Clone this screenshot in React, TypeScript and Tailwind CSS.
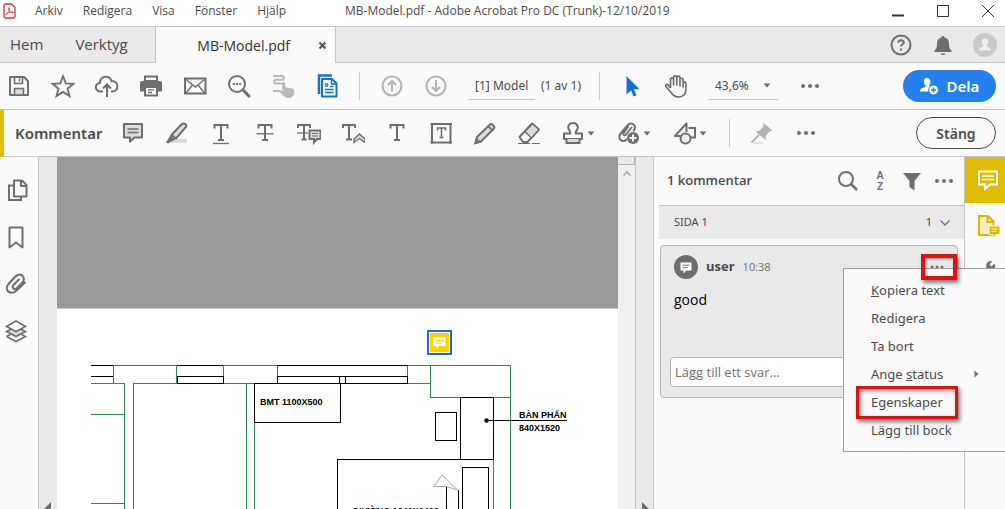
import type { ReactNode } from 'react'

const MENUS = ['Arkiv', 'Redigera', 'Visa', 'Fönster', 'Hjälp']

function Icon({ children, size = 24 }: { children: ReactNode; size?: number }) {
  return (
    <svg width={size} height={size} viewBox="0 0 24 24" fill="none" stroke="#6e6e6e" strokeWidth="2" className="shrink-0" aria-hidden="true">
      {children}
    </svg>
  )
}

function Tool({ label, children }: { label: string; children: ReactNode }) {
  return (
    <button aria-label={label} className="flex h-6 w-6 shrink-0 items-center justify-center">
      <Icon>{children}</Icon>
    </button>
  )
}

function MenuTool({ label, children }: { label: string; children: ReactNode }) {
  return (
    <button aria-label={label} className="flex h-6 w-9 shrink-0 items-center gap-0.5">
      <Icon>{children}</Icon>
      <Caret />
    </button>
  )
}

function Caret() {
  return (
    <svg width="8" height="5" viewBox="0 0 8 5" className="shrink-0" aria-hidden="true">
      <path d="M0.5 0.5h7L4 4.5z" fill="#6e6e6e" />
    </svg>
  )
}

function Dots() {
  return (
    <g fill="#6e6e6e" stroke="none">
      <circle cx="5" cy="12" r="2" />
      <circle cx="12" cy="12" r="2" />
      <circle cx="19" cy="12" r="2" />
    </g>
  )
}

function Divider() {
  return <div className="h-7 w-px shrink-0 bg-[#c8c8c8]" />
}

// serif T shared by the text markup tools
const T_PATH = 'M5.5 7.5V4h13v3.5M12 4v15M9 19h6'

function TitleBar() {
  return (
    <header className="relative flex h-[27px] shrink-0 items-center border-b border-[#c4c4c4] bg-white pb-1 pl-[3px] font-['Open_Sans',sans-serif] text-[12px]">
      <svg width="13" height="16" viewBox="0 0 13 16" fill="none" stroke="#d7373f" aria-hidden="true">
        <path d="M2.5 1h6L12 4.5v9a1.5 1.5 0 0 1-1.5 1.5h-8A1.5 1.5 0 0 1 1 13.5v-11A1.5 1.5 0 0 1 2.5 1z" strokeWidth="1.3" />
        <path d="M3 11.5c2-1 3.7-4 3.3-6.3 0-.8-.9-.7-.8.1.3 2 2.5 4.5 4.5 4.600.9 0 .8-1-.2-1-2 0-4.800.7-6.500 1.800-.7.500-.9.900-.3.800z" strokeWidth="0.9" />
      </svg>
      <nav className="ml-[19px] flex gap-5">
        {MENUS.map(m => <button key={m}>{m}</button>)}
      </nav>
      <h1 className="absolute left-[345px] whitespace-nowrap">MB-Model.pdf - Adobe Acrobat Pro DC (Trunk)-12/10/2019</h1>
      <div className="ml-auto flex gap-[33px] pr-[11px]">
        <button aria-label="Minimera">
          <svg width="12" height="12" viewBox="0 0 12 12"><path d="M0 10.5h12" stroke="#333" strokeWidth="2" /></svg>
        </button>
        <button aria-label="Maximera">
          <svg width="12" height="12" viewBox="0 0 12 12"><path d="M.5.5h11v11H.5z" fill="none" stroke="#333" /></svg>
        </button>
        <button aria-label="Stäng fönster">
          <svg width="12" height="12" viewBox="0 0 12 12"><path d="M0 0l12 12M12 0L0 12" stroke="#333" /></svg>
        </button>
      </div>
    </header>
  )
}

function TabBar() {
  return (
    <div className="flex h-9 shrink-0 bg-[#e9e9e9] font-['Open_Sans',sans-serif]">
      <div className="flex w-[156px] items-center gap-8 border-r border-b border-[#c4c4c4] pl-[10px] text-[15px]">
        <button>Hem</button>
        <button>Verktyg</button>
      </div>
      <div className="flex w-[180px] items-center justify-end gap-7 border-r border-[#c4c4c4] bg-[#fafafa] pr-2 text-[14px] text-[#323232]">
        <span>MB-Model.pdf</span>
        <button aria-label="Stäng flik">
          <svg width="9" height="9" viewBox="0 0 9 9"><path d="M1.5 1.5l6 6M7.5 1.5l-6 6" stroke="#555" strokeWidth="2" /></svg>
        </button>
      </div>
      <div className="flex flex-1 items-center justify-end gap-[18px] border-b border-[#c4c4c4] pr-2">
        <Tool label="Hjälp">
          <circle cx="12" cy="12" r="9.5" />
          <path d="M9.300 9.800c0-3.600 5.400-3.400 5.400-.3 0 2-2.700 2-2.700 4" />
          <path d="M12 15.500v2.200" />
        </Tool>
        <Tool label="Meddelanden">
          <path d="M12 3c-1 0-1.500.6-1.500 1.500C7.500 5 6 7.500 6 10.500c0 4.500-.8 5.500-2.500 7v1.500h17v-1.500c-1.700-1.500-2.500-2.500-2.500-7 0-3-1.500-5.500-4.500-6C13.500 3.600 13 3 12 3zM9.500 20.500h5c-.5 2-4.500 2-5 0z" fill="#6e6e6e" stroke="none" />
        </Tool>
        <Tool label="Konto">
          <circle cx="12" cy="12" r="12" fill="#cacaca" stroke="none" />
          <path d="M12 5.500c-2.200 0-3.200 1.600-3.200 3.600 0 1.300.6 2.500 1.500 3.200v1.200c-2 .6-4.300 1.200-4.300 4h12c0-2.800-2.300-3.400-4.300-4v-1.200c.9-.7 1.500-1.900 1.500-3.200 0-2-1-3.600-3.200-3.600z" fill="#f0f0f0" stroke="none" />
        </Tool>
      </div>
    </div>
  )
}

function MainToolbar() {
  return (
    <div className="flex h-[47px] shrink-0 items-center gap-5 border-b border-[#c4c4c4] bg-[#fafafa] pl-[7px] pr-[9px] text-[12px]">
      <Tool label="Spara">
        <path d="M3 3h14l4 4v14H3z" strokeLinejoin="round" />
        <path d="M7.500 3v6.500h8V3M12.500 4.500v3" strokeWidth="1.600" />
        <path d="M7.500 21v-6.500h9V21z" fill="#dcdcdc" strokeWidth="1.600" />
      </Tool>
      <Tool label="Stjärnmärk">
        <path d="M12 2.200l2.800 7.200 7.700.4-6 4.900 2 7.400-6.500-4.200-6.500 4.200 2-7.400-6-4.900 7.700-.4z" strokeWidth="1.800" />
      </Tool>
      <Tool label="Ladda upp">
        <path d="M8 17.500H5.500a4.300 4.300 0 0 1-.6-8.600C5 1.500 15 .5 16.500 7c7.500-.3 8 10.500.5 10.500h-1" />
        <path d="M12 23V11M8 14.500l4-4 4 4" />
      </Tool>
      <Tool label="Skriv ut">
        <path d="M6 7V2.500h12V7z" />
        <path d="M1 9a2 2 0 0 1 2-2h18a2 2 0 0 1 2 2v8.500h-4V14H5v3.500H1z" fill="#6e6e6e" stroke="none" />
        <path d="M6 13h12v8.500H6z" fill="#fafafa" />
        <path d="M9 15.800h6M9 18.500h4" strokeWidth="1.300" />
      </Tool>
      <Tool label="E-post">
        <path d="M2 4.500h20.500v15H2z" />
        <path d="M3 5.500l9.300 7.500 9.200-7.500M3 19l6.500-8M21.500 19L15 11" strokeWidth="1.400" />
      </Tool>
      <Tool label="Sök">
        <circle cx="10" cy="10" r="8" />
        <path d="M16 16l7 7" strokeWidth="3" />
        <path d="M5.800 10h2M9 10h2M12.200 10h2" />
      </Tool>
      <Tool label="Pekrullning">
        <path d="M2 2h9a1.800 1.800 0 0 1 0 3.800H5a1.800 1.800 0 0 0 0 3.700h6a1.800 1.800 0 0 1 0 3.700M2 17h7" stroke="#b9b9b9" />
        <path d="M11.500 9.500c0-2 2.800-2 2.800 0v3.700l6 1c2 .5 3 1.600 3 3.500 0 4-2.500 6.300-6 6.300-3 0-5.500-2.300-8.800-6.200-1-1.400.6-2.400 3-.8z" fill="#b9b9b9" stroke="none" />
      </Tool>
      <Tool label="Sidor">
        <g stroke="#1473c8">
          <path d="M4 20V1.500h13" strokeWidth="2.500" />
          <path d="M7 5h10l4.500 4.500v13H7z" fill="#fafafa" strokeLinejoin="round" />
          <path d="M16.500 5.500v4.500h4.500" strokeWidth="1.300" />
          <path d="M10 18.500h8.500M10 15.500h8.500M15 12.500h3.500" strokeWidth="1.300" />
          <circle cx="11.500" cy="11" r="1.300" strokeWidth="1.200" />
        </g>
      </Tool>
      <Divider />
      <Tool label="Föregående sida">
        <g stroke="#b4b4b4"><circle cx="12" cy="12" r="9.500" /><path d="M12 17.500V7.500M8 11l4-4 4 4" /></g>
      </Tool>
      <Tool label="Nästa sida">
        <g stroke="#b4b4b4"><circle cx="12" cy="12" r="9.500" /><path d="M12 6v10.500M8 13l4 4 4-4" /></g>
      </Tool>
      <div className="flex shrink-0 items-center gap-1.5">
        <input aria-label="Sida" defaultValue="[1] Model" className="h-7 w-[67px] border-b border-[#c8c8c8] pl-[7px] outline-none" />
        <span className="w-[38px] whitespace-nowrap">(1 av 1)</span>
      </div>
      <Divider />
      <Tool label="Markera">
        <path d="M6.500 2v18.500l4.500-4 2.500 6 3-1.300-2.700-6h5.700z" fill="#1473c8" stroke="none" />
      </Tool>
      <Tool label="Handverktyg">
        <path d="M6.500 14V5.500a1.500 1.500 0 0 1 3.100 0V11V3.500a1.500 1.500 0 0 1 3.200 0V11V3.800a1.500 1.500 0 0 1 3.200 0V12V5.800a1.500 1.500 0 0 1 3.100 0V13V9.500a1.400 1.400 0 0 1 2.900 0V15c0 5-3 8-7.500 8-4.200 0-6-2-7.800-5L1.800 12.500c-.7-2.200 1.300-2.600 2.500-1.300L6.500 14" strokeWidth="1.700" strokeLinejoin="round" />
      </Tool>
      <button className="flex h-7 w-[70px] shrink-0 items-center justify-between border-b border-[#c8c8c8] px-[7px]">43,6% <Caret /></button>
      <Tool label="Fler verktyg"><Dots /></Tool>
      <button className="ml-auto flex h-8 w-[93px] shrink-0 items-center justify-center gap-2 rounded-full bg-[#2680eb] text-[15px] font-semibold text-white">
        <svg width="19" height="17" viewBox="0 0 19 17" aria-hidden="true">
          <path d="M7 0C4.800 0 4 1.600 4 3.800 4 5.400 4.700 6.700 5.500 7.500v1.600C3.500 9.800 0 10.400 0 13.500h9l3-5c-1.500 0-3-.3-3-1V7.500c.8-.8 1.400-2.100 1.400-3.700C10.400 1.600 9.500 0 7 0z" fill="#fff" />
          <circle cx="13.500" cy="12" r="4.900" fill="#fff" stroke="#2680eb" strokeWidth="1" />
          <path d="M13.500 9.500v5M11 12h5" stroke="#2680eb" strokeWidth="1.500" />
        </svg>
        Dela
      </button>
    </div>
  )
}

function CommentToolbar() {
  return (
    <div className="flex h-[47px] shrink-0 items-center gap-5 border-b border-l-4 border-b-[#c4c4c4] border-l-[#e0bd00] bg-[#fafafa] pl-[11px] pr-[9px]">
      <h2 className="w-[86px] shrink-0 text-[15px] font-semibold">Kommentar</h2>
      <Tool label="Notis">
        <path d="M3 3h18v13.500h-7.500l-4.500 4v-4H3z" fill="#dcdcdc" strokeLinejoin="round" />
        <path d="M6.500 8h11M6.500 11.500h11" strokeWidth="1.400" />
      </Tool>
      <Tool label="Markera text">
        <path d="M10 18h12v4H5z" fill="#dcdcdc" stroke="none" />
        <path d="M6.500 14L16.500 3.500c2-2 6-.5 4.500 2.500L11 17.500z" fill="#dcdcdc" />
        <path d="M5.500 14l5 4.500-3 1.500L3 22.500 1 21.500z" fill="#6e6e6e" stroke="none" />
      </Tool>
      <Tool label="Stryk under"><path d={T_PATH} /><path d="M4 22.500h16" strokeWidth="1.300" /></Tool>
      <Tool label="Genomstryk"><path d={T_PATH} /><path d="M3.500 12.800h17" strokeWidth="1.300" /></Tool>
      <Tool label="Ersätt text">
        <path d="M1 7V4h12v3M7 4v14M4.500 18.500h5" />
        <path d="M0 12h11" strokeWidth="1.300" />
        <path d="M12.500 9.500h11v8.500h-3.500l-3 3.500V18h-4.500z" fill="#dcdcdc" />
        <path d="M15 12.500h6M15 15h6" strokeWidth="1.200" />
      </Tool>
      <Tool label="Infoga text">
        <path d="M2 7V4h12v3M8 4v14.500M5 18.500h6" />
        <path d="M13 21.500v-3.500l5.500-5 5.500 5v3.500l-5.500-4z" fill="#dcdcdc" strokeWidth="1.400" />
      </Tool>
      <Tool label="Textkommentar"><path d={T_PATH} /></Tool>
      <Tool label="Textruta">
        <path d="M3 3h18.500v18.500H3z" />
        <path d="M8.500 9.500V7h8v2.500M12.500 7v9M10.500 16.500h4" strokeWidth="1.500" />
        <path d="M1.500 3h3M20 3h3M1.500 21.500h3M20 21.500h3" />
      </Tool>
      <Tool label="Penna">
        <path d="M4 16L17 3.500c1.500-1.500 5.500 2 4 4L8 20.500 2.500 22z" fill="#dcdcdc" strokeLinejoin="round" />
        <path d="M15 5l4.500 4.500M2 22.500l2-4 3 2.500z" strokeWidth="1.600" />
      </Tool>
      <Tool label="Suddgummi">
        <path d="M2.500 16L15 2.500l7 6L10.500 21H6z" strokeLinejoin="round" />
        <path d="M8 10.500L15.500 3l6.500 5.500L14.500 17z" fill="#dcdcdc" strokeWidth="1.300" />
        <path d="M1 22.500h22" strokeWidth="1" strokeDasharray="12 1.500" />
      </Tool>
      <MenuTool label="Stämpel">
        <path d="M9.500 12.500c.5-2-2.300-3.500-2.300-6 0-6 9.600-6 9.600 0 0 2.500-2.800 4-2.300 6h6.500V18H3v-5.500z" strokeLinejoin="round" />
        <path d="M5.500 18v4h13v-4" fill="#dcdcdc" />
      </MenuTool>
      <MenuTool label="Bifoga fil">
        <path d="M16.800 9.500c1.500-2.200 1.600-4.600-.3-6-2-1.500-4.500-.8-6 1L4 12c-2.600 3.200-1.800 6 .2 7.300 1.600 1 3.800.8 5.300-.8M14.500 6.500L9 13.500c-1 1.700-3.500.3-2.400-1.600L11 6" strokeLinecap="round" />
        <circle cx="16" cy="17" r="6" fill="#6e6e6e" stroke="none" />
        <path d="M16 13.500v7M12.500 17h7" stroke="#fff" />
      </MenuTool>
      <MenuTool label="Ritverktyg">
        <path d="M8 15H1.800L13.500 2.500V11" strokeLinejoin="round" />
        <path d="M15.500 7H22v9.500h-4" />
        <circle cx="12.500" cy="17.500" r="5" fill="#f0f0f0" />
      </MenuTool>
      <Divider />
      <Tool label="Fäst verktyg">
        <path d="M13 1.500l9.500 8-3 1-3.500 4-.5 4.500-10-8.500 4.500-1 3.500-4.500z" fill="#b4b4b4" stroke="none" />
        <path d="M9 14l-7.500 7.500" stroke="#b4b4b4" />
        <path d="M4 22h9" stroke="#e0e0e0" />
      </Tool>
      <Tool label="Fler kommentarsverktyg"><Dots /></Tool>
      <button className="ml-auto h-8 w-20 shrink-0 rounded-full border border-[#4b4b4b] text-[14px] font-semibold">Stäng</button>
    </div>
  )
}

function NavRail() {
  return (
    <nav className="flex w-[39px] shrink-0 flex-col items-start gap-[23px] border-r border-[#c4c4c4] bg-[#fafafa] pl-1 pt-[21px]">
      <Tool label="Sidminiatyrer">
        <path d="M10 2.500h8l4.500 4.500v11.500H10z" strokeLinejoin="round" />
        <path d="M17 2.500V8h5.500M9 7.500H5v14.500h12v-3" />
      </Tool>
      <Tool label="Bokmärken"><path d="M5.500 2.500h13v20L12 17.500l-6.500 5z" strokeLinejoin="round" /></Tool>
      <Tool label="Bilagor">
        <path d="M19 4.500c-3-3.500-6-1.500-8 .5L4.500 12c-5 6 2.500 12 7.500 7l9.500-9M19 4.500c3 4-1 6.500-3 8.500l-3.500 3.500c-2.500 1.500-5-1-3-3.500L15.500 7" />
      </Tool>
      <Tool label="Lager">
        <path d="M2.500 17.500L12 22.500l9.500-5-4-2M6.500 15.500l-4 2" strokeWidth="1.600" />
        <path d="M2.500 12.500L12 8l9.500 4.500L12 17.500z" fill="#dcdcdc" strokeWidth="1.600" />
        <path d="M2.500 7.500L12 2l9.500 5.500L12 12.500z" fill="#fafafa" strokeWidth="1.600" />
      </Tool>
    </nav>
  )
}

// floor plan, drawn in sheet coordinates
function Drawing() {
  return (
    <svg width="561" height="200" viewBox="57 309 561 200" fill="none" shapeRendering="crispEdges" className="block" role="img" aria-label="Ritning">
      <g stroke="#2a8c55">
        <path d="M113 365.500h63M113.500 365v18M91 383.500h34M124.500 383v126M133.500 509V383.500h43M176.500 365v18M91 414.500h33M91 503.500h33" />
        <path d="M223.500 365v11M224 365.500h53M223 383.500h31M277.500 365v11M246.500 383v126M254.500 422v87M254 383.500h23" />
        <path d="M407.500 365v11M407 365.500h103.500v144M407 383.500h23M430.500 365v32.500h80M493.500 459v50" />
      </g>
      <g stroke="#000">
        <path d="M91 365.500h22M91 376.500h22M177 365.500h46M177 383.500v-7h46.500v7zM277 365.500h131M277.500 376.500h130v7h-130zM339.500 376v7M345.500 376v7" />
        <path d="M254.500 383.500h86v39h-86zM460.500 397.500h33v62h-33zM435.500 412.500h21v28h-21zM337.500 509v-49.500h156M462.500 509v-41.500h26V509M446.500 487v22M458.500 490v19M486 420.500h81" />
      </g>
      <path d="M434 486.500l8-11.500 15.500 15-11-3.500z" stroke="#aaa" shapeRendering="auto" />
      <circle cx="486.500" cy="420.500" r="2.200" fill="#000" shapeRendering="auto" />
      <g fill="#000" className="font-['Liberation_Sans',sans-serif] text-[9px] font-bold">
        <text x="260" y="405">BMT 1100X500</text>
        <text x="519" y="418">BÀN PHẤN</text>
        <text x="519" y="431">840X1520</text>
        <text x="352" y="514">GIƯỜNG 1640X2400</text>
      </g>
    </svg>
  )
}

function DocumentView() {
  return (
    <main className="flex min-w-0 flex-1">
      <div className="flex w-[18px] shrink-0 items-end justify-center bg-[#e9e9e9]">
        <svg width="8" height="8" viewBox="0 0 8 8" aria-hidden="true"><path d="M7 1v7H0z" fill="#6e6e6e" /></svg>
      </div>
      <div className="relative min-w-0 flex-1 overflow-hidden bg-white">
        <div className="h-[152px] border-b border-[#c4c4c4] bg-[#999]" />
        <Drawing />
        <button aria-label="Visa kommentar" className="absolute left-[370px] top-[173px] flex h-[25px] w-[25px] items-center justify-center border-2 border-[#2a6cb0] bg-white">
          <svg width="19" height="19" viewBox="0 0 19 19" aria-hidden="true">
            <path d="M0 0h19v19H0z" fill="#ffd100" />
            <path d="M3 4h12.500v9H9l-2 2.500-1-2.500H3z" fill="#fff" />
            <path d="M5.500 7.500h8M5.500 10h6" stroke="#ffd100" />
          </svg>
        </button>
      </div>
      <div className="flex w-[18px] shrink-0 flex-col items-center border-r border-[#c4c4c4] bg-[#f0f0f0]">
        <div className="h-2 w-full border-r border-b border-[#b0b0b0] bg-[#e9e9e9]" />
        <svg width="8" height="5" viewBox="0 0 8 5" className="mt-1.5" aria-hidden="true"><path d="M.5 4.500L4 1l3.500 3.500" fill="none" stroke="#a0a0a0" strokeWidth="1.300" /></svg>
      </div>
      <div className="flex w-[18px] shrink-0 items-end justify-center border-r border-[#c4c4c4] bg-[#e9e9e9]">
        <svg width="8" height="8" viewBox="0 0 8 8" aria-hidden="true"><path d="M1 1v7h7z" fill="#6e6e6e" /></svg>
      </div>
    </main>
  )
}

function CommentPanel() {
  return (
    <aside className="w-[311px] shrink-0 border-r border-[#c4c4c4] bg-[#fafafa]">
      <div className="flex h-12 items-center gap-2 pl-[13px] pr-2">
        <h2 className="mr-auto font-['Open_Sans',sans-serif] text-[13px] font-semibold">1 kommentar</h2>
        <Tool label="Sök kommentarer"><circle cx="10" cy="10" r="7" /><path d="M15 15l6 6" strokeWidth="2.500" /></Tool>
        <button aria-label="Sortera" className="flex h-6 w-6 flex-col items-center justify-center font-['Liberation_Sans',sans-serif] text-[10px] leading-[11px] font-bold text-[#6e6e6e]">
          <span>A</span>
          <span>Z</span>
        </button>
        <Tool label="Filtrera"><path d="M3 4h18l-6.500 8v9.500L9.500 18v-6z" fill="#6e6e6e" stroke="none" /></Tool>
        <Tool label="Fler alternativ"><Dots /></Tool>
      </div>
      <button className="ml-[5px] flex h-[34px] w-[305px] items-center border-t border-[#c4c4c4] bg-[#e9e9e9] pl-[15px] pr-[14px] text-[11px]">
        <span className="mr-auto">SIDA 1</span>
        <span>1</span>
        <svg width="10" height="6" viewBox="0 0 10 6" className="ml-2" aria-hidden="true"><path d="M.5.5L5 5 9.500.5" fill="none" stroke="#6e6e6e" strokeWidth="1.300" /></svg>
      </button>
      <article className="relative mx-1.5 mt-1.5 h-[153px] rounded border border-[#b4b4b4] bg-[#e9e9e9] px-[9px] pt-[9px]">
        <div className="flex h-6 items-center gap-2 px-1">
          <svg width="24" height="24" viewBox="0 0 24 24" aria-hidden="true">
            <circle cx="12" cy="12" r="12" fill="#6e6e6e" />
            <path d="M6.500 7.500h11v8h-5l-3 3v-3h-3z" fill="#fff" />
            <path d="M8.500 10.200h7M8.500 12.700h5" stroke="#6e6e6e" />
          </svg>
          <b className="font-['Open_Sans',sans-serif] text-[13px]">user</b>
          <time className="font-['Open_Sans',sans-serif] text-[11px] text-[#6e6e6e]">10:38</time>
          <button aria-label="Alternativ" className="ml-auto">
            <svg width="14" height="4" viewBox="0 0 14 4" fill="#6e6e6e"><circle cx="2" cy="2" r="1.500" /><circle cx="7" cy="2" r="1.500" /><circle cx="12" cy="2" r="1.500" /></svg>
          </button>
        </div>
        <p className="mt-[9px] px-1 font-['Open_Sans',sans-serif] text-[14px] leading-6 text-black">good</p>
        <input aria-label="Svar" placeholder="Lägg till ett svar..." className="mt-[45px] h-[30px] w-full rounded border border-[#b4b4b4] bg-white px-1 font-['Open_Sans',sans-serif] text-[13px] outline-none placeholder:text-[#6e6e6e]" />
      </article>
    </aside>
  )
}

function ToolRail() {
  return (
    <nav className="flex w-10 shrink-0 flex-col bg-[#fafafa]">
      <button aria-label="Kommentar" className="flex h-[46px] items-center justify-center bg-[#e0bd00] pl-1.5">
        <svg width="22" height="22" viewBox="0 0 22 22" fill="none" stroke="#fff" aria-hidden="true">
          <path d="M2 2.500h18v13h-7l-5 4.500v-4.500H2z" strokeWidth="2" />
          <path d="M5 7h12M5 10.500h12" strokeWidth="1.500" />
        </svg>
      </button>
      <button aria-label="Ordna sidor" className="flex h-[45px] items-center justify-center pl-1.5">
        <svg width="24" height="24" viewBox="0 0 24 24" fill="none" stroke="#d9b800" aria-hidden="true">
          <path d="M3 2h9l5.500 5.500V21H3z" fill="#f6edbf" strokeWidth="2" />
          <path d="M11.500 2v6h6" strokeWidth="2" />
          <path d="M13 12h11v8.500h-4l-3 3v-3H13z" fill="#d9b800" stroke="#fafafa" strokeWidth="1" />
          <path d="M15.500 15h6M15.500 17.500h5" stroke="#fff" />
        </svg>
      </button>
      <button aria-label="Fler verktyg" className="flex justify-center pl-2.5 pt-3">
        <svg width="20" height="20" viewBox="0 0 20 20" aria-hidden="true">
          <path d="M14.500 3.500L11.500 6.500 9.500 4.500 12 1C8.500.5 5.500 3 6.500 7L1 13.500 4.500 17 10 11.500c4 .5 6.500-3.500 4.500-8z" fill="#6e6e6e" />
        </svg>
      </button>
    </nav>
  )
}

function ContextMenu() {
  return (
    <ul className="absolute right-0 top-[111px] w-[162px] border-y border-l border-[#a0a0a0] bg-[#fafafa] pb-[7px] pt-[7px] text-[13px] leading-7">
      <li><button className="pl-[27px]"><u>K</u>opiera text</button></li>
      <li><button className="pl-[27px]">Redigera</button></li>
      <li><button className="pl-[27px]">Ta bort</button></li>
      <li>
        <button className="flex w-full items-center justify-between pl-[27px] pr-[26px]">
          <span>Ange <u>s</u>tatus</span>
          <svg width="5" height="8" viewBox="0 0 5 8" aria-hidden="true"><path d="M.5.5v7L4.500 4z" fill="#6e6e6e" /></svg>
        </button>
      </li>
      <li className="relative">
        <button className="pl-[27px]">Egenskaper</button>
        <div className="pointer-events-none absolute -top-0.5 left-3 h-[33px] w-[102px] border-[3px] border-[#d91212] shadow-[2px_3px_4px_rgba(0,0,0,0.5),inset_2px_2px_4px_rgba(0,0,0,0.4)]" />
      </li>
      <li><button className="pl-[27px]">Lägg till bock</button></li>
    </ul>
  )
}

export default function App() {
  return (
    <div className="flex h-screen flex-col overflow-hidden bg-white font-['Noto_Sans',sans-serif] text-[#4b4b4b]">
      <TitleBar />
      <TabBar />
      <MainToolbar />
      <CommentToolbar />
      <div className="relative flex min-h-0 flex-1 overflow-hidden">
        <NavRail />
        <DocumentView />
        <CommentPanel />
        <ToolRail />
        <ContextMenu />
        <div className="pointer-events-none absolute right-12 top-[97px] h-[26px] w-9 border-4 border-[#d91212] shadow-[2px_3px_4px_rgba(0,0,0,0.5),inset_1px_1px_3px_rgba(0,0,0,0.4)]" />
      </div>
    </div>
  )
}
